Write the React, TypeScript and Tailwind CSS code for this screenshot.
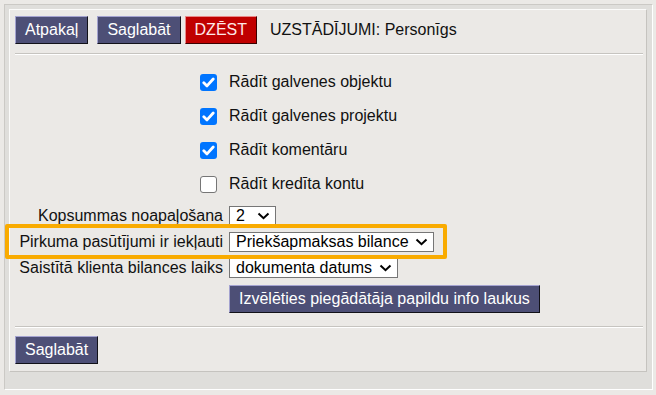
import React from "react";

function Btn({ children, red = false }: { children: React.ReactNode; red?: boolean }) {
  return (
    <button
      className={
        red
          ? "h-[28px] border border-t-[#e98a8a] border-l-[#e98a8a] border-r-[#3a0000] border-b-[#3a0000] bg-[#c00000] px-[9px] text-[16px] leading-none text-[#fde8e8]"
          : "h-[28px] border border-t-[#a4a3d0] border-l-[#a4a3d0] border-r-[#111118] border-b-[#111118] bg-[#4d4f76] px-[9px] text-[16px] leading-none text-white"
      }
    >
      {children}
    </button>
  );
}

function Check({ on }: { on: boolean }) {
  if (!on)
    return <span className="mr-[6px] block h-[17px] w-[17px] rounded-[3px] border border-[#767676] bg-white" />;
  return (
    <span className="mr-[6px] flex h-[17px] w-[17px] items-center justify-center rounded-[3px] bg-[#0075ff]">
      <svg width="13" height="11" viewBox="0 0 13 11">
        <path d="M1.8 5.8 L5 8.9 L11.2 2" fill="none" stroke="white" strokeWidth="2.8" strokeLinecap="round" strokeLinejoin="round" />
      </svg>
    </span>
  );
}

function Select({ value, w }: { value: string; w: string }) {
  return (
    <span className={`flex h-[20px] items-center justify-between border border-[#767676] bg-white pl-[6px] pr-[5px] text-[16px] leading-none text-black ${w}`}>
      <span>{value}</span>
      <svg width="13" height="8" viewBox="0 0 13 8">
        <path d="M1.5 1.5 L6.5 6.2 L11.5 1.5" fill="none" stroke="black" strokeWidth="2" />
      </svg>
    </span>
  );
}

const checks: [string, boolean][] = [
  ["Rādīt galvenes objektu", true],
  ["Rādīt galvenes projektu", true],
  ["Rādīt komentāru", true],
  ["Rādīt kredīta kontu", false],
];

export default function App() {
  return (
    <div className="relative h-[395px] w-[656px] bg-[#ebe9e6] pt-[4px] pl-[4px] pr-[3px] font-['Liberation_Sans',Arial,sans-serif] text-[#111]">
      <div className="border border-t-[#cbc9c5] border-l-[#cbc9c5] border-r-white border-b-white bg-[#dfdedb] pt-[4px] pl-[4px] pr-[5px] pb-[17px]">
        <div className="border border-t-[#fbfbfa] border-l-[#fbfbfa] border-r-[#c5c3bf] border-b-[#c5c3bf] bg-[#ebe9e6] pt-[6px] pl-[5px] pr-[3px] pb-[6px]">
          <div className="flex items-center">
            <Btn>Atpakaļ</Btn>
            <span className="w-[9px]" />
            <Btn>Saglabāt</Btn>
            <span className="w-[4px]" />
            <Btn red>DZĒST</Btn>
            <span className="ml-[13px] text-[16px]">UZSTĀDĪJUMI: Personīgs</span>
          </div>
          <div className="mt-[9px] border-t border-b border-t-[#c6c4c0] border-b-white" />

          <div className="mt-[10px] grid grid-cols-[208px_1fr] gap-x-[6px] text-[16px]">
            {checks.map(([t, on]) => (
              <React.Fragment key={t}>
                <div className="flex h-[34px] items-center justify-end">
                  <Check on={on} />
                </div>
                <div className="flex h-[34px] items-center">{t}</div>
              </React.Fragment>
            ))}
            <div className="mt-[2px] flex h-[26px] items-center justify-end">Kopsummas noapaļošana</div>
            <div className="mt-[2px] flex h-[26px] items-center">
              <Select value="2" w="w-[47px]" />
            </div>
            <div className="flex h-[26px] items-center justify-end">Pirkuma pasūtījumi ir iekļauti</div>
            <div className="flex h-[26px] items-center">
              <Select value="Priekšapmaksas bilance" w="w-[205px]" />
            </div>
            <div className="flex h-[26px] items-center justify-end">Saistītā klienta bilances laiks</div>
            <div className="flex h-[26px] items-center">
              <Select value="dokumenta datums" w="w-[169px]" />
            </div>
            <div />
            <div className="mt-[4px]">
              <Btn>Izvēlēties piegādātāja papildu info laukus</Btn>
            </div>
          </div>

          <div className="mt-[13px] border-t border-b border-t-[#c6c4c0] border-b-white" />
          <div className="mt-[8px] pb-[1px]">
            <Btn>Saglabāt</Btn>
          </div>
        </div>
      </div>
      <div className="pointer-events-none absolute left-[5px] top-[224px] h-[35px] w-[442px] rounded-[2px] border-[4px] border-[#f9ab00]" />
    </div>
  );
}
